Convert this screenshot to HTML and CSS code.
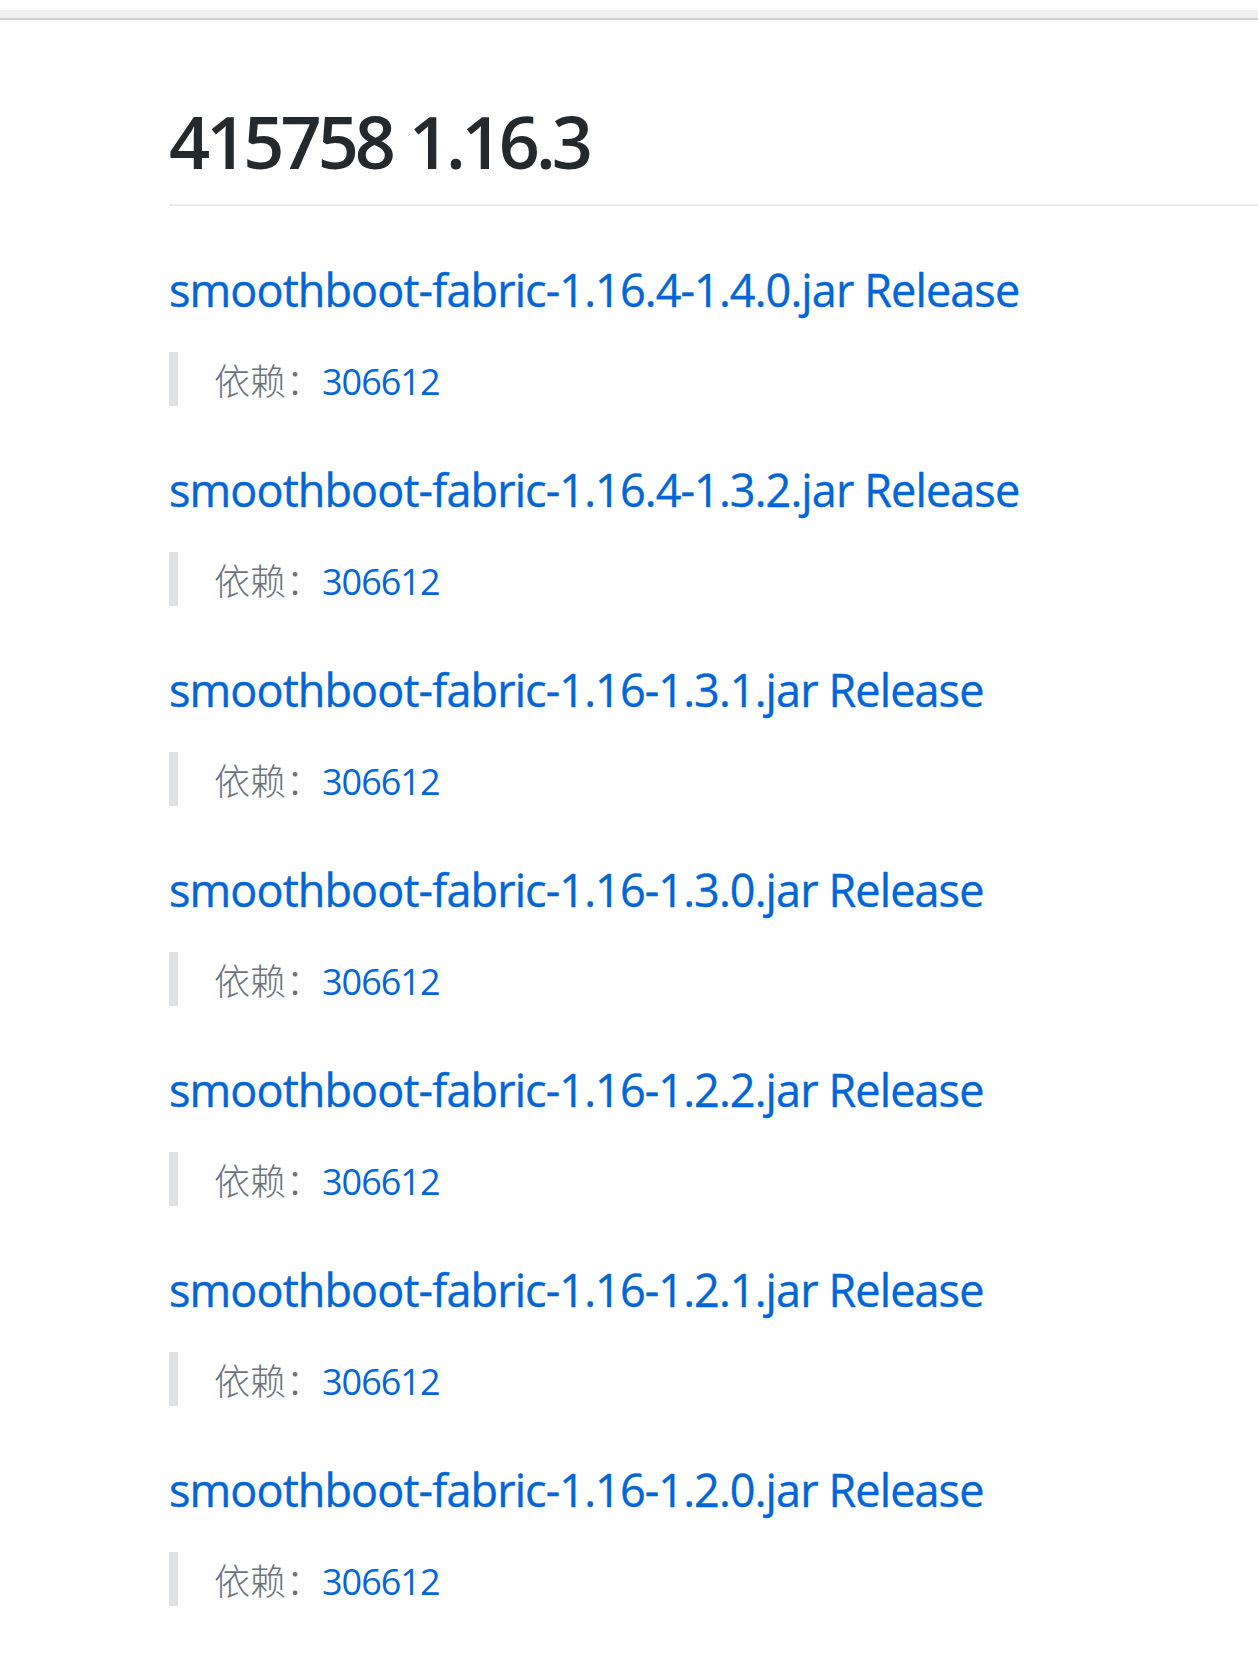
FILE: index.html
```html
<!DOCTYPE html>
<html lang="zh">
<head>
<meta charset="utf-8">
<title>415758 1.16.3</title>
<link rel="stylesheet" href="styles.css">
</head>
<body>
<div class="topbar"></div>
<main class="markdown">
  <h1 class="title">415758 1.16.3</h1>
  <h3 class="file"><a href="#">smoothboot-fabric-1.16.4-1.4.0.jar Release</a></h3>
  <blockquote class="dep"><p><span class="label">依赖：</span><a href="#">306612</a></p></blockquote>
  <h3 class="file"><a href="#">smoothboot-fabric-1.16.4-1.3.2.jar Release</a></h3>
  <blockquote class="dep"><p><span class="label">依赖：</span><a href="#">306612</a></p></blockquote>
  <h3 class="file"><a href="#">smoothboot-fabric-1.16-1.3.1.jar Release</a></h3>
  <blockquote class="dep"><p><span class="label">依赖：</span><a href="#">306612</a></p></blockquote>
  <h3 class="file"><a href="#">smoothboot-fabric-1.16-1.3.0.jar Release</a></h3>
  <blockquote class="dep"><p><span class="label">依赖：</span><a href="#">306612</a></p></blockquote>
  <h3 class="file"><a href="#">smoothboot-fabric-1.16-1.2.2.jar Release</a></h3>
  <blockquote class="dep"><p><span class="label">依赖：</span><a href="#">306612</a></p></blockquote>
  <h3 class="file"><a href="#">smoothboot-fabric-1.16-1.2.1.jar Release</a></h3>
  <blockquote class="dep"><p><span class="label">依赖：</span><a href="#">306612</a></p></blockquote>
  <h3 class="file"><a href="#">smoothboot-fabric-1.16-1.2.0.jar Release</a></h3>
  <blockquote class="dep"><p><span class="label">依赖：</span><a href="#">306612</a></p></blockquote>
</main>
</body>
</html>
```

FILE: styles.css
```css
html, body {
  margin: 0;
  padding: 0;
  background: #fff;
}
body {
  font-family: "Open Sans", "Noto Sans CJK SC", sans-serif;
  color: #24292e;
  overflow: hidden;
}
.topbar {
  height: 8px;
  margin-top: 10px;
  background: #f1f1f1;
  border-bottom: 2px solid #cdcdcd;
}
.markdown {
  margin-left: 169px;
  padding-top: 76px;
  font-size: 36px;
  line-height: 54px;
}
.title {
  margin: 0 0 36px;
  font-size: 72px;
  font-weight: 600;
  line-height: 90px;
  letter-spacing: -4px;
  word-spacing: 2px;
  padding-bottom: 18px;
  border-bottom: 2px solid #eaecef;
  color: #24292e;
}
.file {
  margin: 54px 0 34px;
  padding-top: 2px;
  font-size: 45px;
  font-weight: 400;
  line-height: 56px;
  letter-spacing: -0.9px;
  -webkit-text-stroke: 0.4px #0366d6;
}
.file a, .dep a {
  color: #0366d6;
  text-decoration: none;
}
.dep {
  margin: 0 0 36px;
  padding: 0 36px;
  border-left: 9px solid #dfe2e5;
  color: #6a737d;
  height: 54px;
}
.dep p {
  margin: 0;
  height: 54px;
  line-height: 54px;
}
.label {
  font-family: "Noto Sans CJK SC", sans-serif;
  font-weight: 300;
  line-height: 54px;
}
.dep a {
  font-family: "Open Sans", sans-serif;
  letter-spacing: -1px;
  line-height: 54px;
}
```
